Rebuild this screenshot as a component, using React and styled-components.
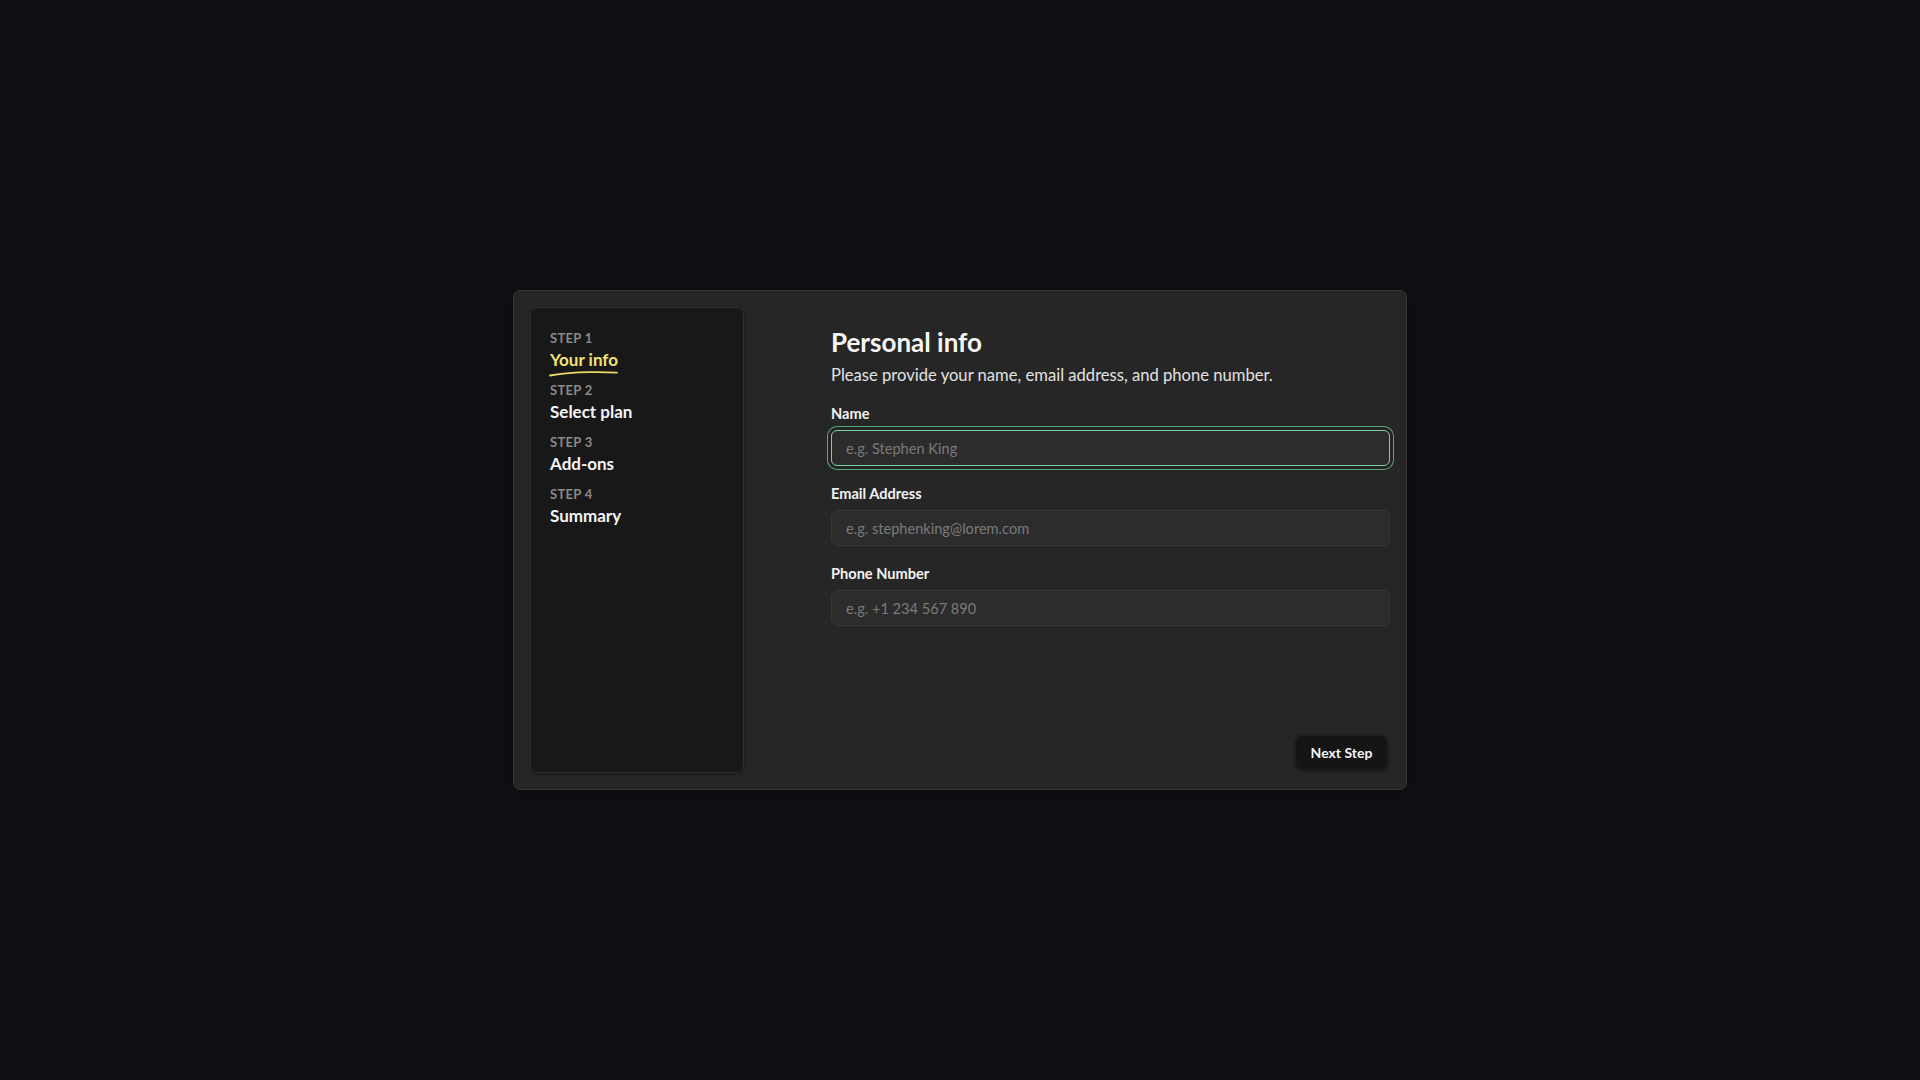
import React from 'react';
import styled, { createGlobalStyle } from 'styled-components';

const GlobalStyle = createGlobalStyle`
  html, body {
    margin: 0;
    padding: 0;
    background: #0f1014;
  }
  body {
    font-family: 'Lato', 'Noto Sans', sans-serif;
    -webkit-font-smoothing: antialiased;
  }
  * {
    box-sizing: border-box;
  }
`;

const Page = styled.div`
  width: 100vw;
  height: 100vh;
  display: flex;
  align-items: center;
  justify-content: center;
`;

const Card = styled.div`
  width: 894px;
  height: 500px;
  padding: 16px;
  display: grid;
  grid-template-columns: 214px 1fr;
  background: #262626;
  border: 1px solid #363636;
  border-radius: 7px;
  box-shadow: 0 2px 10px rgba(0, 0, 0, 0.35);
`;

const Sidebar = styled.nav`
  display: flex;
  flex-direction: column;
  gap: 12px;
  padding: 22px 19px;
  background: #181818;
  border: 1px solid #2f2f2f;
  border-radius: 7px;
  box-shadow: 0 1px 3px rgba(0, 0, 0, 0.4);
`;

const Step = styled.div`
  display: flex;
  flex-direction: column;
  gap: 4px;
`;

const StepLabel = styled.span`
  font-size: 13px;
  line-height: 16px;
  font-weight: 700;
  letter-spacing: 0.3px;
  color: #8a8a8a;
  text-transform: uppercase;
`;

const StepTitle = styled.span`
  position: relative;
  align-self: flex-start;
  font-size: 17px;
  line-height: 20px;
  font-weight: 700;
  color: ${({ active }) => (active ? '#f2e272' : '#f4f4f4')};
`;

const Underline = styled.svg`
  position: absolute;
  left: -1px;
  top: 20px;
  width: calc(100% + 1px);
  height: 7px;
  overflow: visible;
`;

const Main = styled.section`
  display: flex;
  flex-direction: column;
  padding: 20px 0 3px 87px;
`;

const Title = styled.h1`
  margin: 0;
  font-size: 26px;
  line-height: 30px;
  font-weight: 700;
  color: #f6f6f6;
`;

const Subtitle = styled.p`
  margin: 7px 0 0;
  font-size: 16.6px;
  line-height: 22px;
  color: #e2e2e2;
`;

const Form = styled.form`
  display: flex;
  flex-direction: column;
  gap: 19px;
  margin-top: 19px;
`;

const Field = styled.label`
  display: flex;
  flex-direction: column;
  gap: 7px;
`;

const FieldLabel = styled.span`
  font-size: 14.6px;
  line-height: 18px;
  font-weight: 700;
  color: #f2f2f2;
`;

const Input = styled.input`
  height: 36px;
  padding: 0 14px;
  font-family: inherit;
  font-size: 14.6px;
  color: #eaeaea;
  background: #2c2c2c;
  border: 1px solid ${({ focused }) => (focused ? '#7fd0a2' : '#363636')};
  border-radius: 6px;
  outline: none;
  box-shadow: ${({ focused }) =>
    focused ? '0 0 0 3px #232323, 0 0 0 4px #5aa67f' : 'none'};

  &::placeholder {
    color: #7a7a7a;
  }
`;

const Footer = styled.div`
  margin-top: auto;
  display: flex;
  justify-content: flex-end;
  padding-right: 2px;
`;

const NextButton = styled.button`
  width: 93px;
  height: 35px;
  font-family: inherit;
  font-size: 14px;
  font-weight: 700;
  color: #f4f4f4;
  background: #151515;
  border: 1px solid #1e1e1e;
  border-radius: 8px;
  box-shadow: 0 1px 3px rgba(0, 0, 0, 0.5);
  cursor: pointer;
`;

const steps = [
  { n: 1, title: 'Your info', active: true },
  { n: 2, title: 'Select plan' },
  { n: 3, title: 'Add-ons' },
  { n: 4, title: 'Summary' },
];

const fields = [
  { label: 'Name', placeholder: 'e.g. Stephen King', focused: true },
  { label: 'Email Address', placeholder: 'e.g. stephenking@lorem.com' },
  { label: 'Phone Number', placeholder: 'e.g. +1 234 567 890' },
];

export default function App() {
  return (
    <Page>
      <GlobalStyle />
      <Card>
        <Sidebar>
          {steps.map(s => (
            <Step key={s.n}>
              <StepLabel>Step {s.n}</StepLabel>
              <StepTitle active={s.active}>
                {s.title}
                {s.active && (
                  <Underline viewBox="0 0 72 7" preserveAspectRatio="none">
                    <path
                      d="M1 5.5 Q 20 2.5 42 2.2 Q 58 2 71 2.6"
                      fill="none"
                      stroke="#e9d967"
                      strokeWidth="1.8"
                      strokeLinecap="round"
                    />
                  </Underline>
                )}
              </StepTitle>
            </Step>
          ))}
        </Sidebar>
        <Main>
          <Title>Personal info</Title>
          <Subtitle>Please provide your name, email address, and phone number.</Subtitle>
          <Form onSubmit={e => e.preventDefault()}>
            {fields.map(f => (
              <Field key={f.label}>
                <FieldLabel>{f.label}</FieldLabel>
                <Input placeholder={f.placeholder} focused={f.focused} />
              </Field>
            ))}
          </Form>
          <Footer>
            <NextButton type="button">Next Step</NextButton>
          </Footer>
        </Main>
      </Card>
    </Page>
  );
}
